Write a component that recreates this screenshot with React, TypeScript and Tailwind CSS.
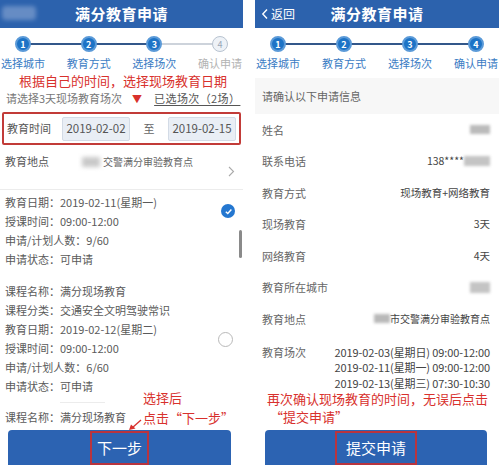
import React from "react";

const stepLabels = ["选择城市", "教育方式", "选择场次", "确认申请"];

function Header({ back }: { back: "blur" | "plain" }) {
  return (
    <div className="relative flex h-[28px] items-center justify-center bg-[#2c62ad]">
      {back === "plain" ? (
        <div className="absolute left-[6px] top-0 flex h-full items-center gap-[2px] text-[12px] text-white">
          <svg width="8" height="12" viewBox="0 0 8 12">
            <path d="M6 1.5 1.8 6 6 10.5" fill="none" stroke="white" strokeWidth="1.4" />
          </svg>
          <span>返回</span>
        </div>
      ) : (
        <div className="absolute left-[2px] top-[6px] h-[14px] w-[34px] rounded-sm bg-[#7f9fcf] opacity-70 blur-[2px]" />
      )}
      <span className="text-[15px] font-bold tracking-[0.5px] text-white">满分教育申请</span>
    </div>
  );
}

function Steps({ done }: { done: number }) {
  return (
    <div className="relative h-[44px]">
      <div className="absolute left-[23px] right-[23px] top-[15px] flex">
        {[0, 1, 2].map((i) => (
          <div key={i} className={i + 2 <= done ? "h-[1.5px] flex-1 bg-[#33578a]" : "h-[1.5px] flex-1 bg-[#cdd3db]"} />
        ))}
      </div>
      <div className="relative flex justify-between pt-[8px]">
        {stepLabels.map((label, i) => {
          const on = i < done;
          return (
            <div key={label} className="flex w-[46px] flex-col items-center">
              {on ? (
                <div className="flex h-[16px] w-[16px] items-center justify-center rounded-full border-2 border-[#5b9ad8] bg-[#1d73c6] text-[9px] font-bold leading-none text-white">
                  {i + 1}
                </div>
              ) : (
                <div className="flex h-[16px] w-[16px] items-center justify-center rounded-full border border-[#b8c3d0] bg-[#eef2f7] text-[9px] leading-none text-[#9aa8b8]">
                  {i + 1}
                </div>
              )}
              <span className={on ? "mt-[4px] whitespace-nowrap text-[11px] leading-[14px] text-[#3b7cc4]" : "mt-[4px] whitespace-nowrap text-[11px] leading-[14px] text-[#b3b3b3]"}>
                {label}
              </span>
            </div>
          );
        })}
      </div>
    </div>
  );
}

function Line({ children }: { children: React.ReactNode }) {
  return <div className="h-[19px] whitespace-nowrap text-[11px] leading-[19px] text-[#5a5a5a]">{children}</div>;
}

function Radio({ checked }: { checked: boolean }) {
  return checked ? (
    <div className="flex h-[14px] w-[14px] items-center justify-center rounded-full bg-[#2477d0]">
      <svg width="9" height="9" viewBox="0 0 10 10">
        <path d="M2 5.2 4.2 7.3 8.2 2.8" fill="none" stroke="white" strokeWidth="1.6" />
      </svg>
    </div>
  ) : (
    <div className="h-[15px] w-[15px] rounded-full border border-[#b9b9b9] bg-white" />
  );
}

function LeftPanel() {
  return (
    <div className="relative flex h-[465px] w-[243px] flex-col overflow-hidden bg-white">
      <Header back="blur" />
      <Steps done={3} />
      <div className="h-[17px] pl-[3px] text-center text-[13px] leading-[17px] text-[#d8312d]">根据自己的时间，选择现场教育日期</div>
      <div className="flex h-[18px] items-center pl-[6px] text-[11px] text-[#777]">
        <span>请选择3天现场教育场次</span>
        <span className="ml-[10px] text-[10px] text-[#d8312d]">▼</span>
        <span className="ml-[12px] tracking-[0.4px] text-[#555] underline underline-offset-2">已选场次（2场）</span>
      </div>
      <div className="mx-[2px] mt-[5px] flex h-[33px] items-center rounded-[2px] border-2 border-[#c23b38] pl-[3px] pr-[3px]">
        <span className="w-[55px] text-[11px] text-[#555]">教育时间</span>
        <div className="flex h-[24px] w-[68px] items-center justify-center rounded-[2px] border border-[#d3dbe6] bg-[#e9eef5] text-[11.5px] text-[#555]">2019-02-02</div>
        <span className="flex-1 text-center text-[11px] text-[#666]">至</span>
        <div className="flex h-[24px] w-[68px] items-center justify-center rounded-[2px] border border-[#d3dbe6] bg-[#e9eef5] text-[11.5px] text-[#555]">2019-02-15</div>
      </div>
      <div className="flex h-[45px] border-b border-[#ececec] pl-[5px] pr-[8px] pt-[7px]">
        <span className="w-[77px] text-[11px] leading-[19px] text-[#555]">教育地点</span>
        <div className="mt-[5px] h-[10px] w-[18px] bg-[#c9c9c9] blur-[2px]" />
        <span className="ml-[3px] text-[10px] leading-[19px] text-[#666]">交警满分审验教育点</span>
        <svg className="ml-auto mt-[14px]" width="7" height="11" viewBox="0 0 7 11">
          <path d="M1 1 5.5 5.5 1 10" fill="none" stroke="#aaa" strokeWidth="1.1" />
        </svg>
      </div>
      <div className="flex-1 overflow-hidden pl-[5px] pr-[8px] pt-[3px]">
        <div className="flex justify-between">
          <div>
            <Line>教育日期：2019-02-11(星期一)</Line>
            <Line>授课时间：09:00-12:00</Line>
            <Line>申请/计划人数：9/60</Line>
            <Line>申请状态：可申请</Line>
          </div>
          <div className="mt-[11px]">
            <Radio checked />
          </div>
        </div>
        <div className="mt-[13px] flex items-center justify-between">
          <div>
            <Line>课程名称：满分现场教育</Line>
            <Line>课程分类：交通安全文明驾驶常识</Line>
            <Line>教育日期：2019-02-12(星期二)</Line>
            <Line>授课时间：09:00-12:00</Line>
            <Line>申请/计划人数：6/60</Line>
            <Line>申请状态：可申请</Line>
          </div>
          <div className="mr-[2px]">
            <Radio checked={false} />
          </div>
        </div>
        <div className="ml-[55px] mt-[6px] h-px w-[45px] bg-[#ececec]" />
        <div className="mt-[5px]">
          <Line>课程名称：满分现场教育</Line>
        </div>
      </div>
      <div className="ml-[8px] mr-[12px] flex h-[35px] justify-center rounded-t-[4px] bg-[#2c63b2] pt-[1px]">
        <div className="flex h-[34px] items-center border-2 border-[#b8343f] px-[5px] text-[15px] text-white">下一步</div>
      </div>
      <div className="absolute right-[1px] top-[230px] h-[28px] w-[3px] rounded-full bg-[#8a8a8a]" />
      <div className="absolute left-[143px] top-[388px] text-[13px] leading-[20px] text-[#d8312d]">
        <div>选择后</div>
        <div>点击“下一步”</div>
      </div>
      <svg className="absolute left-[128px] top-[419px]" width="14" height="12" viewBox="0 0 14 12">
        <path d="M13 1 4 9" stroke="#d8312d" strokeWidth="1.4" />
        <path d="M1 11 3 5.5 7.5 9.5Z" fill="#d8312d" />
      </svg>
    </div>
  );
}

function Row({ label, children }: { label: string; children: React.ReactNode }) {
  return (
    <div className="flex h-[31.5px] items-center justify-between pl-[7px] pr-[9px]">
      <span className="text-[11px] text-[#666]">{label}</span>
      <div className="flex items-center text-[10.5px] text-[#444]">{children}</div>
    </div>
  );
}

function RightPanel() {
  return (
    <div className="relative flex h-[465px] w-[244px] flex-col overflow-hidden bg-white">
      <Header back="plain" />
      <Steps done={4} />
      <div className="mt-[6px] flex h-[36px] items-center bg-[#f7f7f7] pl-[7px] text-[11px] text-[#666]">请确认以下申请信息</div>
      <Row label="姓名">
        <div className="h-[9px] w-[20px] bg-[#bbb] blur-[1.5px]" />
      </Row>
      <Row label="联系电话">
        <span>138****</span>
        <div className="h-[10px] w-[26px] bg-[#c4c4c4] blur-[1.5px]" />
      </Row>
      <Row label="教育方式">现场教育+网络教育</Row>
      <Row label="现场教育">3天</Row>
      <Row label="网络教育">4天</Row>
      <Row label="教育所在城市">
        <div className="h-[11px] w-[20px] bg-[#c4c4c4] blur-[1.5px]" />
      </Row>
      <Row label="教育地点">
        <div className="h-[9px] w-[16px] bg-[#b9b9b9] blur-[1.5px]" />
        <span className="text-[10px]">市交警满分审验教育点</span>
      </Row>
      <div className="flex justify-between pl-[7px] pr-[9px] pt-[10px]">
        <span className="text-[11px] leading-[15.5px] text-[#666]">教育场次</span>
        <div className="text-right text-[11px] leading-[15.5px] tracking-[-0.1px] text-[#444]">
          <div>2019-02-03(星期日) 09:00-12:00</div>
          <div>2019-02-11(星期一) 09:00-12:00</div>
          <div>2019-02-13(星期三) 07:30-10:30</div>
        </div>
      </div>
      <div className="mt-auto ml-[10px] mr-[12px] flex h-[35px] justify-center rounded-t-[4px] bg-[#2c63b2] pt-[1px]">
        <div className="flex h-[34px] items-center border-2 border-[#b8343f] px-[9px] text-[15px] text-white">提交申请</div>
      </div>
      <div className="absolute left-[12px] top-[390px] text-[13px] leading-[18px] text-[#d8312d]">
        <div>再次确认现场教育的时间，无误后点击</div>
        <div className="pl-[3px]">“提交申请”</div>
      </div>
    </div>
  );
}

export default function App() {
  return (
    <div className="flex h-[465px] w-[499px] gap-[12px] overflow-hidden bg-white font-['Noto_Sans_CJK_SC','Noto_Sans',sans-serif]">
      <LeftPanel />
      <RightPanel />
    </div>
  );
}
